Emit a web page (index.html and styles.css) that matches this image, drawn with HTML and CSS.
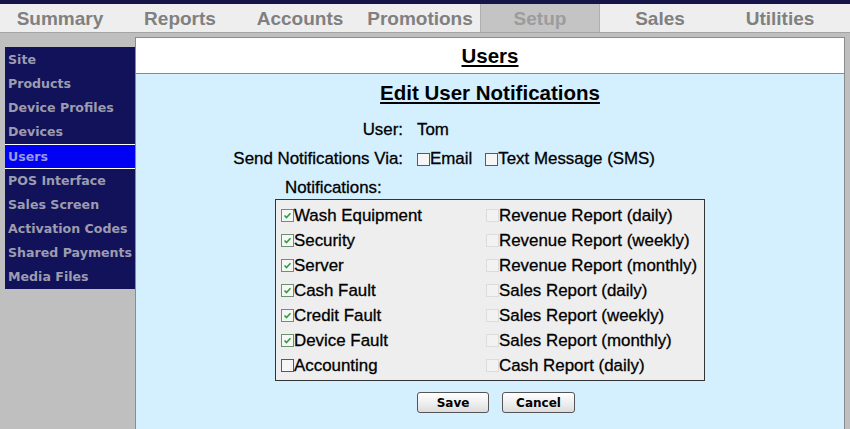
FILE: index.html
```html
<!DOCTYPE html>
<html>
<head>
<meta charset="utf-8">
<title>Users</title>
<link rel="stylesheet" href="styles.css">
</head>
<body>
<div class="stripe"></div>
<nav class="tabs">
  <span class="tab">Summary</span>
  <span class="tab">Reports</span>
  <span class="tab">Accounts</span>
  <span class="tab">Promotions</span>
  <span class="tab active">Setup</span>
  <span class="tab">Sales</span>
  <span class="tab">Utilities</span>
</nav>
<div class="main">
  <ul class="side">
    <li>Site</li>
    <li>Products</li>
    <li>Device Profiles</li>
    <li>Devices</li>
    <li class="current">Users</li>
    <li>POS Interface</li>
    <li>Sales Screen</li>
    <li>Activation Codes</li>
    <li>Shared Payments</li>
    <li>Media Files</li>
  </ul>
  <section class="panel">
    <header class="panel-head"><h1>Users</h1></header>
    <div class="panel-body">
      <h2>Edit User Notifications</h2>
      <div class="form-row row-user"><span class="lbl">User:</span><span class="val">Tom</span></div>
      <div class="form-row row-send"><span class="lbl">Send Notifications Via:</span><span class="val"><span class="cb dark"></span>Email<span class="cb dark sp"></span>Text Message (SMS)</span></div>
      <div class="notif-label">Notifications:</div>
      <div class="notif-box">
        <div class="item"><span class="cb on"><svg viewBox="0 0 13 13"><path d="M3 6.5 L5.3 9 L10 3.8"/></svg></span>Wash Equipment</div>
        <div class="item"><span class="cb faint"></span>Revenue Report (daily)</div>
        <div class="item"><span class="cb on"><svg viewBox="0 0 13 13"><path d="M3 6.5 L5.3 9 L10 3.8"/></svg></span>Security</div>
        <div class="item"><span class="cb faint"></span>Revenue Report (weekly)</div>
        <div class="item"><span class="cb on"><svg viewBox="0 0 13 13"><path d="M3 6.5 L5.3 9 L10 3.8"/></svg></span>Server</div>
        <div class="item"><span class="cb faint"></span>Revenue Report (monthly)</div>
        <div class="item"><span class="cb on"><svg viewBox="0 0 13 13"><path d="M3 6.5 L5.3 9 L10 3.8"/></svg></span>Cash Fault</div>
        <div class="item"><span class="cb faint"></span>Sales Report (daily)</div>
        <div class="item"><span class="cb on"><svg viewBox="0 0 13 13"><path d="M3 6.5 L5.3 9 L10 3.8"/></svg></span>Credit Fault</div>
        <div class="item"><span class="cb faint"></span>Sales Report (weekly)</div>
        <div class="item"><span class="cb on"><svg viewBox="0 0 13 13"><path d="M3 6.5 L5.3 9 L10 3.8"/></svg></span>Device Fault</div>
        <div class="item"><span class="cb faint"></span>Sales Report (monthly)</div>
        <div class="item"><span class="cb dark"></span>Accounting</div>
        <div class="item"><span class="cb faint"></span>Cash Report (daily)</div>
      </div>
      <div class="buttons"><button class="btn">Save</button><button class="btn">Cancel</button></div>
    </div>
  </section>
</div>
</body>
</html>
```
FILE: styles.css
```css
html, body {
  margin: 0;
  padding: 0;
}
body {
  background: #bfbfbf;
  height: 429px;
  overflow: hidden;
  display: flex;
  flex-direction: column;
  font-family: "Liberation Sans", Arial, sans-serif;
}
.stripe {
  height: 4px;
  background: #15154a;
  flex: none;
}
.tabs {
  flex: none;
  display: flex;
  height: 28px;
  background: #eeeeee;
  border-bottom: 1px solid #a4a4a4;
}
.tab {
  width: 120px;
  text-align: center;
  font-weight: bold;
  font-size: 19px;
  line-height: 30px;
  color: #808080;
}
.tab.active {
  background: #c4c4c4;
  color: #9c9c9c;
  border-left: 1px solid #b0b0b0;
  border-right: 1px solid #b0b0b0;
  width: 118px;
  box-sizing: content-box;
}
.main {
  flex: 1;
  display: flex;
  align-items: flex-start;
  margin-top: 4px;
  padding-left: 5px;
  min-height: 0;
}
.side {
  list-style: none;
  margin: 10px 0 0 0;
  padding: 1px 0 0 0;
  width: 130px;
  background: #12125a;
  flex: none;
}
.side li {
  height: 24px;
  line-height: 24px;
  padding-left: 3px;
  font-family: "DejaVu Sans", Verdana, sans-serif;
  font-weight: bold;
  font-size: 12.6px;
  color: #9c9cae;
  white-space: nowrap;
  overflow: hidden;
}
.side li.current {
  height: 23px;
  line-height: 23px;
  background: #0000f2;
  color: #9a9ad8;
  border-top: 1px solid #ffffff;
  border-bottom: 1px solid #ffffff;
}
.panel {
  width: 708px;
  align-self: stretch;
  border: 1px solid #8c8c8c;
  border-bottom: none;
  background: #d4effd;
  display: flex;
  flex-direction: column;
}
.panel-head {
  height: 35px;
  background: #ffffff;
  border-bottom: 1px solid #8a8a8a;
  display: flex;
  align-items: center;
  justify-content: center;
}
.panel-head h1 {
  margin: 0;
  font-size: 20.5px;
  font-weight: bold;
  text-decoration: underline;
  color: #000;
  line-height: 24px;
}
.panel-body {
  flex: 1;
  color: #000;
  font-size: 16.9px;
}
.panel-body h2 {
  margin: 0;
  padding-top: 7px;
  text-align: center;
  font-size: 20.5px;
  line-height: 24px;
  font-weight: bold;
  text-decoration: underline;
}
.form-row {
  display: flex;
  align-items: center;
  white-space: nowrap;
  -webkit-text-stroke: 0.3px #000;
}
.row-user {
  margin-top: 10px;
  height: 30px;
}
.row-send {
  height: 28px;
}
.lbl {
  width: 267px;
  text-align: right;
}
.val {
  margin-left: 14px;
  display: flex;
  align-items: center;
}
.cb {
  display: inline-block;
  width: 13px;
  height: 13px;
  box-sizing: border-box;
  flex: none;
  -webkit-text-stroke: 0;
}
.cb svg {
  display: block;
  width: 11px;
  height: 11px;
  fill: none;
  stroke: #2f9a3c;
  stroke-width: 1.8;
}
.cb.sp {
  margin-left: 13px;
}
.cb.dark {
  border: 1px solid #5a5a5a;
  background: #f6f6f6;
}
.cb.on {
  border: 1px solid #6f8f74;
  background: #f4f8f4;
}
.cb.faint {
  border: 1px solid #dcdcdc;
  background: #f2f2f2;
}
.notif-label {
  margin-top: 4px;
  height: 22px;
  line-height: 22px;
  padding-left: 149px;
  -webkit-text-stroke: 0.3px #000;
}
.notif-box {
  width: 430px;
  box-sizing: border-box;
  margin: 0 auto;
  border: 1px solid #333333;
  background: #eeeeee;
  padding: 3px 0 2px 5px;
  display: grid;
  grid-template-columns: 205px 1fr;
  grid-auto-rows: 25px;
}
.item {
  display: flex;
  align-items: center;
  white-space: nowrap;
  -webkit-text-stroke: 0.3px #000;
}
.buttons {
  margin-top: 11px;
  padding-left: 281px;
  display: flex;
  gap: 13px;
}
.btn {
  height: 21px;
  padding: 0;
  border: 1px solid #555555;
  border-radius: 3px;
  background: linear-gradient(#ffffff, #ececec 60%, #dcdcdc);
  font-family: "DejaVu Sans", Verdana, sans-serif;
  font-weight: bold;
  font-size: 12px;
  color: #000;
}
.btn:first-child {
  width: 72px;
}
.btn:last-child {
  width: 73px;
}
```
